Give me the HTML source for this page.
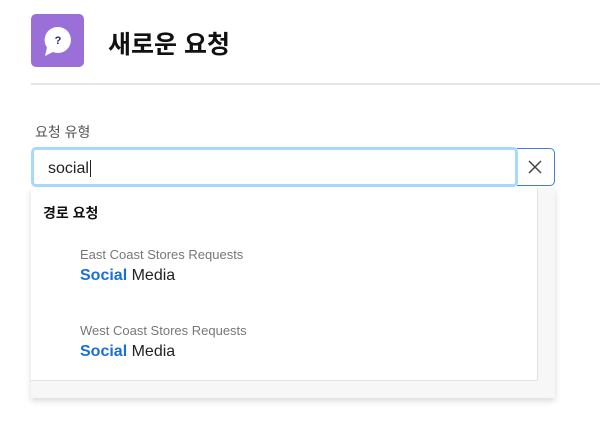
<!DOCTYPE html>
<html><head><meta charset="utf-8"><style>
*{margin:0;padding:0;box-sizing:border-box}
body{width:600px;height:447px;background:#fff;font-family:"Liberation Sans","Noto Sans CJK KR",sans-serif;position:relative;overflow:hidden}
.a{position:absolute}
</style></head><body>
<div class="a" style="left:31px;top:14px;width:53px;height:53px;background:#9a6fd8;border-radius:5px"></div>
<svg class="a" style="left:31px;top:14px" width="53" height="53" viewBox="0 0 53 53">
<path d="M27 13a13 13 0 1 1 -5 25 L14 42 L16 33.5 A13 13 0 0 1 27 13z" fill="#fff"/>
<text x="27" y="30" text-anchor="middle" font-family="Liberation Sans" font-weight="bold" font-size="11" fill="#2a2a6a">?</text>
</svg>
<div class="a" style="left:108px;top:25px;font-size:25px;font-weight:bold;color:#111">새로운 요청</div>
<div class="a" style="left:31px;top:83px;width:569px;height:2px;background:#e6e6e6"></div>
<div class="a" style="left:35px;top:122px;font-size:14px;color:#555">요청 유형</div>
<div class="a" style="left:31px;top:147px;width:487px;height:40px;border:3px solid #a8d9fa;border-radius:5px"></div>
<div class="a" style="left:48px;top:160px;font-size:16px;color:#222">social<span style="border-left:1px solid #222;margin-left:1px"></span></div>
<div class="a" style="left:517px;top:148px;width:38px;height:38px;border:1px solid #3f7fd8;border-left:none;border-radius:0 5px 5px 0"></div>
<svg class="a" style="left:528px;top:160px" width="14" height="14"><path d="M1 1L13 13M13 1L1 13" stroke="#444" stroke-width="1.5"/></svg>
<div class="a" style="left:31px;top:188px;width:524px;height:210px;background:#f7f7f8;box-shadow:0 3px 6px rgba(0,0,0,.15)"></div>
<div class="a" style="left:31px;top:188px;width:507px;height:193px;background:#fff;border-right:1px solid #e2e2e2;border-bottom:1px solid #e2e2e2"></div>
<div class="a" style="left:43px;top:203px;font-size:14px;font-weight:bold;color:#111">경로 요청</div>
<div class="a" style="left:80px;top:247px;font-size:13px;color:#777">East Coast Stores Requests</div>
<div class="a" style="left:80px;top:267px;font-size:16px;color:#222"><b style="color:#1a6fd4">Social</b> Media</div>
<div class="a" style="left:80px;top:323px;font-size:13px;color:#777">West Coast Stores Requests</div>
<div class="a" style="left:80px;top:343px;font-size:16px;color:#222"><b style="color:#1a6fd4">Social</b> Media</div>
</body></html>
